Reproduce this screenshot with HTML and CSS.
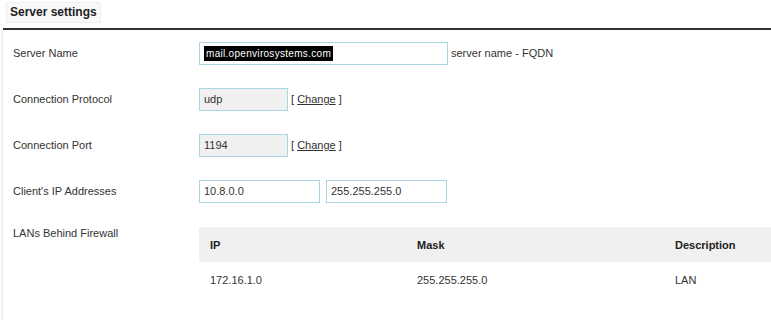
FILE: index.html
```html
<!DOCTYPE html>
<html>
<head>
<meta charset="utf-8">
<link rel="stylesheet" href="styles.css">
</head>
<body>
<div class="page">
  <div class="tabbar">
    <div class="tab">Server settings</div>
  </div>
  <div class="content">
    <div class="row">
      <div class="label">Server Name</div>
      <div class="field">
        <div class="input wide"><span class="sel">mail.openvirosystems.com</span></div>
        <span class="hint">server name - FQDN</span>
      </div>
    </div>
    <div class="row">
      <div class="label">Connection Protocol</div>
      <div class="field">
        <div class="input short ro">udp</div>
        <span class="hint">[ <a href="#">Change</a> ]</span>
      </div>
    </div>
    <div class="row">
      <div class="label">Connection Port</div>
      <div class="field">
        <div class="input short ro">1194</div>
        <span class="hint">[ <a href="#">Change</a> ]</span>
      </div>
    </div>
    <div class="row">
      <div class="label">Client's IP Addresses</div>
      <div class="field pair">
        <div class="input half">10.8.0.0</div>
        <div class="input half">255.255.255.0</div>
      </div>
    </div>
    <div class="row lanrow">
      <div class="label">LANs Behind Firewall</div>
      <div class="lans">
        <div class="lhead">
          <div class="c1">IP</div>
          <div class="c2">Mask</div>
          <div class="c3">Description</div>
        </div>
        <div class="lrow">
          <div class="c1">172.16.1.0</div>
          <div class="c2">255.255.255.0</div>
          <div class="c3">LAN</div>
        </div>
      </div>
    </div>
  </div>
</div>
</body>
</html>
```
FILE: styles.css
```css
html, body {
  margin: 0;
  padding: 0;
  background: #fff;
  font-family: "Liberation Sans", Arial, sans-serif;
  font-size: 11px;
  color: #333;
  overflow: hidden;
}
.page {
  width: 771px;
  height: 320px;
  overflow: hidden;
}
.tabbar {
  margin-left: 3px;
  padding: 2px 0 0 3px;
  height: 30px;
  border-bottom: 2px solid #333;
  box-sizing: border-box;
}
.tab {
  display: inline-block;
  background: #f9f9f9;
  border: 1px solid #eee;
  border-radius: 2px;
  padding: 3px 3px 3px 3px;
  font-weight: bold;
  font-size: 12px;
  line-height: 13px;
  color: #222;
}
.content {
  margin-left: 1px;
  border-left: 2px solid #f0f0f0;
  padding-top: 0;
  height: 290px;
}
.row {
  display: flex;
  align-items: center;
  height: 46px;
}
.label {
  width: 186px;
  padding-left: 10px;
  flex: none;
}
.field {
  display: flex;
  align-items: center;
}
.input {
  box-sizing: border-box;
  height: 23px;
  border: 1px solid #a9d6e2;
  background: #fff;
  padding: 0 4px;
  line-height: 21px;
  display: flex;
  align-items: center;
  white-space: nowrap;
}
.wide { width: 249px; }
.short { width: 89px; }
.half { width: 121px; }
.pair { gap: 6px; }
.ro { background: #f0f0f0; }
.sel {
  background: #000;
  color: #fff;
  font-size: 10px;
  line-height: 15px;
  padding: 0 2px;
  letter-spacing: 0.3px;
}
.hint {
  margin-left: 3px;
}
.hint a {
  color: #333;
  text-decoration: underline;
}
.lanrow {
  align-items: flex-start;
  height: auto;
  padding-top: 13px;
}
.lans {
  flex: none;
  width: 620px;
}
.lhead, .lrow {
  display: flex;
}
.lhead {
  background: #f0f0f0;
  height: 35px;
  align-items: center;
  font-weight: bold;
  color: #222;
}
.lrow {
  height: 36px;
  align-items: center;
}
.c1 { width: 218px; padding-left: 11px; box-sizing: border-box; flex: none; }
.c2 { width: 258px; flex: none; }
.c3 { flex: 1; }
```
